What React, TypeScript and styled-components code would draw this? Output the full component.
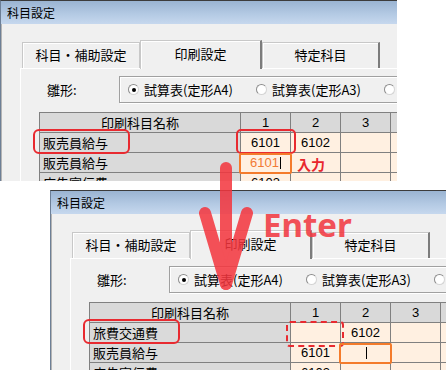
import React from 'react';
import styled, { createGlobalStyle, css } from 'styled-components';

type MarkKind = 'name' | 'red' | 'dashed' | 'orange';

type Cell = {
  text?: string;
  entry?: boolean;
  caret?: boolean;
  mark?: MarkKind;
  note?: string;
};

type Row = {
  name: string;
  nameMark?: boolean;
  cells: Cell[];
};

// columns past the third one sit under the cropped edge of the screenshot
const COLUMNS = ['1', '2', '3', '', ''];
const LAYOUTS = ['試算表(定形A4)', '試算表(定形A3)', ''];

const before: Row[] = [
  { name: '販売員給与', nameMark: true, cells: [{ text: '6101', mark: 'red' }, { text: '6102' }] },
  { name: '販売員給与', cells: [{ text: '6101', entry: true, caret: true, mark: 'orange', note: '入力' }] },
  { name: '広告宣伝費', cells: [{ text: '6103' }] },
];

const after: Row[] = [
  { name: '旅費交通費', nameMark: true, cells: [{ mark: 'dashed' }, { text: '6102' }] },
  { name: '販売員給与', cells: [{ text: '6101' }, { caret: true, mark: 'orange' }] },
  { name: '広告宣伝費', cells: [{ text: '6103' }] },
];

const GlobalStyle = createGlobalStyle`
  html, body {
    margin: 0;
    padding: 0;
    background: #ffffff;
    overflow: hidden;
  }
  body {
    font-family: "Noto Sans CJK JP", "Noto Sans", sans-serif;
    color: #000;
  }
`;

const Canvas = styled.div`
  position: relative;
  width: 446px;
  height: 370px;
  overflow: hidden;
  display: flex;
  flex-direction: column;
  align-items: flex-start;
`;

const Window = styled.div<{ $width: number; $height: number; $offset?: boolean }>`
  flex: none;
  width: ${(p) => p.$width}px;
  height: ${(p) => p.$height}px;
  margin: ${(p) => (p.$offset ? '9px 0 0 50px' : '0')};
  box-sizing: border-box;
  border-top: 1px solid #3c3c3c;
  border-left: 1px solid #6d7f96;
  background: #f0f0f0;
  overflow: hidden;
  display: flex;
  flex-direction: column;
`;

const TitleBar = styled.div`
  flex: none;
  height: 23px;
  padding-left: 6px;
  background: linear-gradient(to bottom, #9ab4d2 0%, #b3c9e3 55%, #c6d8ee 100%);
  font-size: 12px;
  line-height: 23px;
`;

const Client = styled.div`
  flex: 1;
  border-left: 1px solid #b4b4b4;
  padding-top: 16px;
`;

const TabStrip = styled.div`
  display: flex;
  align-items: flex-end;
  height: 28px;
  padding-left: 20px;
`;

const Tab = styled.div<{ $active?: boolean; $edge: 'light' | 'dark' }>`
  flex: none;
  box-sizing: border-box;
  width: ${(p) => (p.$active ? 122 : 118)}px;
  height: ${(p) => (p.$active ? 29 : 26)}px;
  margin-bottom: ${(p) => (p.$active ? -1 : 0)}px;
  background: #f0f0f0;
  border: 1px solid #c8c8c8;
  border-bottom: none;
  border-right: ${(p) => (p.$edge === 'dark' ? '2px solid #7c7c7c' : '1px solid #c8c8c8')};
  box-shadow: inset 1px 1px 0 #ffffff;
  text-align: center;
  font-size: 13px;
  line-height: ${(p) => (p.$active ? 26 : 24)}px;
  position: relative;
  z-index: ${(p) => (p.$active ? 1 : 0)};
`;

const Panel = styled.div`
  margin-left: 18px;
  border-top: 1px solid #ffffff;
  border-left: 1px solid #ffffff;
  padding: 7px 0 0 18px;
`;

const FormRow = styled.div`
  display: flex;
  align-items: center;
  padding-left: 8px;
`;

const FieldLabel = styled.div`
  flex: none;
  width: 72px;
  font-size: 13px;
  line-height: 16px;
`;

const Choices = styled.div`
  flex: none;
  display: flex;
  align-items: center;
  box-sizing: border-box;
  width: 440px;
  height: 27px;
  padding-left: 8px;
  border: 1px solid #a0a0a0;
  box-shadow: inset 1px 1px 0 #ffffff, 1px 1px 0 #ffffff;
`;

const Choice = styled.label`
  flex: none;
  display: flex;
  align-items: center;
  gap: 5px;
  width: 128px;
  font-size: 13px;
  line-height: 16px;
  white-space: nowrap;
`;

const Radio = styled.span<{ $on?: boolean }>`
  flex: none;
  position: relative;
  box-sizing: border-box;
  width: 11px;
  height: 11px;
  border-radius: 50%;
  border: 1px solid #8c8c8c;
  border-right-color: #d4d4d4;
  border-bottom-color: #d4d4d4;
  background: #ffffff;
  ${(p) =>
    p.$on &&
    css`
      &::after {
        content: '';
        position: absolute;
        left: 2.5px;
        top: 2.5px;
        width: 4px;
        height: 4px;
        border-radius: 50%;
        background: #000;
      }
    `}
`;

const Grid = styled.div`
  margin-top: 9px;
  display: grid;
  grid-template-columns: 200px repeat(5, 49px);
  grid-auto-rows: 19px;
  gap: 1px;
  width: max-content;
  background: #808080;
  border-top: 1px solid #808080;
  border-left: 1px solid #808080;
`;

const HeadCell = styled.div<{ $num?: boolean }>`
  background: #d9d9d9;
  text-align: center;
  font-family: ${(p) => (p.$num ? '"Liberation Sans", sans-serif' : '"Noto Sans CJK JP", sans-serif')};
  font-size: 13px;
  line-height: 19px;
  white-space: nowrap;
`;

const NameCell = styled.div`
  position: relative;
  background: #dadada;
  padding-left: 3px;
  font-size: 13px;
  line-height: 19px;
  white-space: nowrap;
`;

const ValueCell = styled.div<{ $entry?: boolean }>`
  position: relative;
  background: #fff0e1;
  text-align: center;
  font-family: "Liberation Sans", sans-serif;
  font-size: 13px;
  line-height: 19px;
  color: ${(p) => (p.$entry ? '#f27a34' : '#000')};
  white-space: nowrap;
`;

const Caret = styled.span`
  display: inline-block;
  width: 1px;
  height: 12px;
  margin-left: 1px;
  background: #000;
  vertical-align: -2px;
`;

const markStyles = {
  name: css`
    left: -7px;
    top: -4px;
    width: 97px;
    height: 25px;
    border: 2px solid #e82a30;
    border-radius: 6px;
  `,
  red: css`
    left: -5px;
    top: -4px;
    width: 60px;
    height: 25px;
    border: 2px solid #e82a30;
    border-radius: 5px;
  `,
  dashed: css`
    left: -5px;
    top: -2px;
    width: 58px;
    height: 26px;
    border: 2px dashed #e82a30;
    border-radius: 4px;
  `,
  orange: css`
    left: -2px;
    top: 0;
    width: 53px;
    height: 21px;
    border: 2px solid #f47b2b;
    border-radius: 2px;
  `,
};

const Mark = styled.span<{ $kind: MarkKind }>`
  position: absolute;
  z-index: 2;
  box-sizing: border-box;
  pointer-events: none;
  ${(p) => markStyles[p.$kind]}
`;

const Note = styled.span`
  position: absolute;
  left: calc(100% + 7px);
  top: -1px;
  font-family: "Noto Sans CJK JP", sans-serif;
  font-weight: 700;
  font-size: 14px;
  line-height: 21px;
  color: #e8262d;
  white-space: nowrap;
`;

const ArrowMark = styled.svg`
  position: absolute;
  left: 190px;
  top: 150px;
  z-index: 5;
  opacity: 0.86;
  pointer-events: none;
`;

const EnterLabel = styled.div`
  position: absolute;
  left: 263px;
  top: 208px;
  z-index: 5;
  font-family: "Noto Sans", "Liberation Sans", sans-serif;
  font-weight: 700;
  font-size: 33px;
  line-height: 33px;
  color: #f23a42;
  opacity: 0.88;
`;

type SheetProps = {
  rows: Row[];
  width: number;
  height: number;
  offset?: boolean;
};

const Sheet: React.FC<SheetProps> = ({ rows, width, height, offset }) => (
  <Window $width={width} $height={height} $offset={offset}>
    <TitleBar>科目設定</TitleBar>
    <Client>
      <TabStrip>
        <Tab $edge="light">科目・補助設定</Tab>
        <Tab $active $edge="dark">印刷設定</Tab>
        <Tab $edge="dark">特定科目</Tab>
      </TabStrip>
      <Panel>
        <FormRow>
          <FieldLabel>雛形:</FieldLabel>
          <Choices>
            {LAYOUTS.map((label, i) => (
              <Choice key={i}>
                <Radio $on={i === 0} />
                {label}
              </Choice>
            ))}
          </Choices>
        </FormRow>
        <Grid>
          <HeadCell>印刷科目名称</HeadCell>
          {COLUMNS.map((c, i) => (
            <HeadCell key={i} $num>
              {c}
            </HeadCell>
          ))}
          {rows.map((row, r) => (
            <React.Fragment key={r}>
              <NameCell>
                {row.name}
                {row.nameMark && <Mark $kind="name" />}
              </NameCell>
              {COLUMNS.map((_, i) => {
                const cell = row.cells[i] ?? {};
                return (
                  <ValueCell key={i} $entry={cell.entry}>
                    {cell.text}
                    {cell.caret && <Caret />}
                    {cell.mark && <Mark $kind={cell.mark}>{cell.note && <Note>{cell.note}</Note>}</Mark>}
                  </ValueCell>
                );
              })}
            </React.Fragment>
          ))}
        </Grid>
      </Panel>
    </Client>
  </Window>
);

const App: React.FC = () => (
  <>
    <GlobalStyle />
    <Canvas>
      <Sheet rows={before} width={397} height={181} />
      <Sheet rows={after} width={420} height={180} offset />
      <ArrowMark width="80" height="150" viewBox="0 0 80 150">
        <g fill="none" stroke="#f4363e" strokeWidth="12" strokeLinecap="round" strokeLinejoin="round">
          <line x1="36" y1="18" x2="36" y2="134" />
          <polyline points="15,63 36,134 57,63" />
        </g>
      </ArrowMark>
      <EnterLabel>Enter</EnterLabel>
    </Canvas>
  </>
);

export default App;
